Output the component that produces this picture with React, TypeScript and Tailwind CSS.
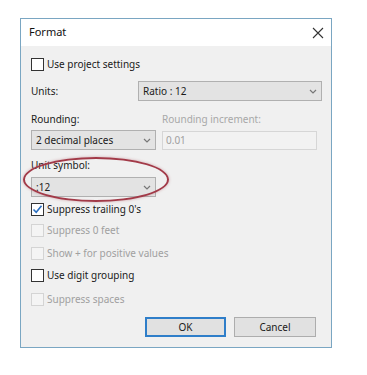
import React from "react";

const font = { fontFamily: '"Noto Sans", "Open Sans", sans-serif' };

function Chevron() {
  return (
    <svg width="8" height="5" viewBox="0 0 8 5" className="shrink-0">
      <path d="M1 1 L4 4 L7 1" fill="none" stroke="#777" strokeWidth="1.2" />
    </svg>
  );
}

function Combo({ text, className }: { text: string; className: string }) {
  return (
    <div
      className={`flex items-center justify-between border border-[#b0b0b0] bg-[#e3e3e3] pl-[4px] pr-[4px] text-[10px] text-[#1a1a1a] ${className}`}
    >
      <span>{text}</span>
      <Chevron />
    </div>
  );
}

function Check({
  label,
  checked,
  disabled,
  className = "",
}: {
  label: string;
  checked?: boolean;
  disabled?: boolean;
  className?: string;
}) {
  return (
    <div className={`flex h-[14px] items-center gap-[3px] ${className}`}>
      <div
        className={`flex h-[13px] w-[13px] items-center justify-center border ${
          disabled ? "border-[#d4d4d4] bg-[#f4f4f4]" : "border-[#333333] bg-white"
        }`}
      >
        {checked && (
          <svg width="11" height="11" viewBox="0 0 11 11">
            <path d="M1.5 5.5 L4.2 8.2 L9.5 1.8" fill="none" stroke="#2a6fc0" strokeWidth="1.6" />
          </svg>
        )}
      </div>
      <span className={`text-[10px] ${disabled ? "text-[#a0a0a0]" : "text-[#1a1a1a]"}`}>{label}</span>
    </div>
  );
}

export default function App() {
  return (
    <div className="h-[375px] w-[367px] bg-white pl-[20px] pt-[18px]" style={font}>
      <div className="relative flex h-[330px] w-[312px] flex-col border border-[#7aa6c2] bg-[#f0f0f0]">
        <div className="flex h-[27px] items-center justify-between bg-white pl-[8px] pr-[7px]">
          <span className="text-[11px] text-[#111]">Format</span>
          <svg width="12" height="12" viewBox="0 0 12 12">
            <path d="M1 1 L11 11 M11 1 L1 11" stroke="#333" strokeWidth="1.1" />
          </svg>
        </div>
        <div className="flex flex-col pl-[10px] pr-[9px]">
          <div className="mt-[11px]">
            <Check label="Use project settings" />
          </div>
          <div className="mt-[10px] flex h-[20px] items-center">
            <span className="w-[107px] text-[10px] text-[#1a1a1a]">Units:</span>
            <Combo text="Ratio : 12" className="h-[20px] w-[184px]" />
          </div>
          <div className="mt-[11px] flex h-[14px] items-center">
            <span className="w-[131px] text-[10px] text-[#1a1a1a]">Rounding:</span>
            <span className="text-[10px] text-[#a8a8a8]">Rounding increment:</span>
          </div>
          <div className="mt-[4px] flex h-[20px] items-center">
            <Combo text="2 decimal places" className="h-[20px] w-[125px]" />
            <div className="ml-[6px] flex h-[19px] w-[155px] items-center border border-[#d6d6d6] bg-[#f2f2f2] pl-[3px] text-[10px] text-[#a0a0a0]">
              0.01
            </div>
          </div>
          <div className="mt-[8px] flex h-[14px] items-center">
            <span className="text-[10px] text-[#1a1a1a]">Unit symbol:</span>
          </div>
          <div className="mt-[5px]">
            <Combo text=":12" className="h-[20px] w-[125px]" />
          </div>
          <Check label="Suppress trailing 0's" checked className="mt-[5px]" />
          <Check label="Suppress 0 feet" disabled className="mt-[7px]" />
          <Check label="Show + for positive values" disabled className="mt-[9px]" />
          <Check label="Use digit grouping" className="mt-[8px]" />
          <Check label="Suppress spaces" disabled className="mt-[10px]" />
          <div className="mt-[11px] flex justify-end gap-[8px] pr-[6px]">
            <div className="flex h-[20px] w-[81px] items-center justify-center border-2 border-[#2f7ec9] bg-[#e1e1e1] text-[10px] text-[#1a1a1a]">
              OK
            </div>
            <div className="flex h-[20px] w-[82px] items-center justify-center border border-[#adadad] bg-[#e1e1e1] text-[10px] text-[#1a1a1a]">
              Cancel
            </div>
          </div>
        </div>
        <div className="pointer-events-none absolute left-[2px] top-[138px] h-[45px] w-[146px] rounded-[50%] border-2 border-[#a23a48] shadow-[0_0_3px_rgba(162,58,72,0.4)]" />
      </div>
    </div>
  );
}
